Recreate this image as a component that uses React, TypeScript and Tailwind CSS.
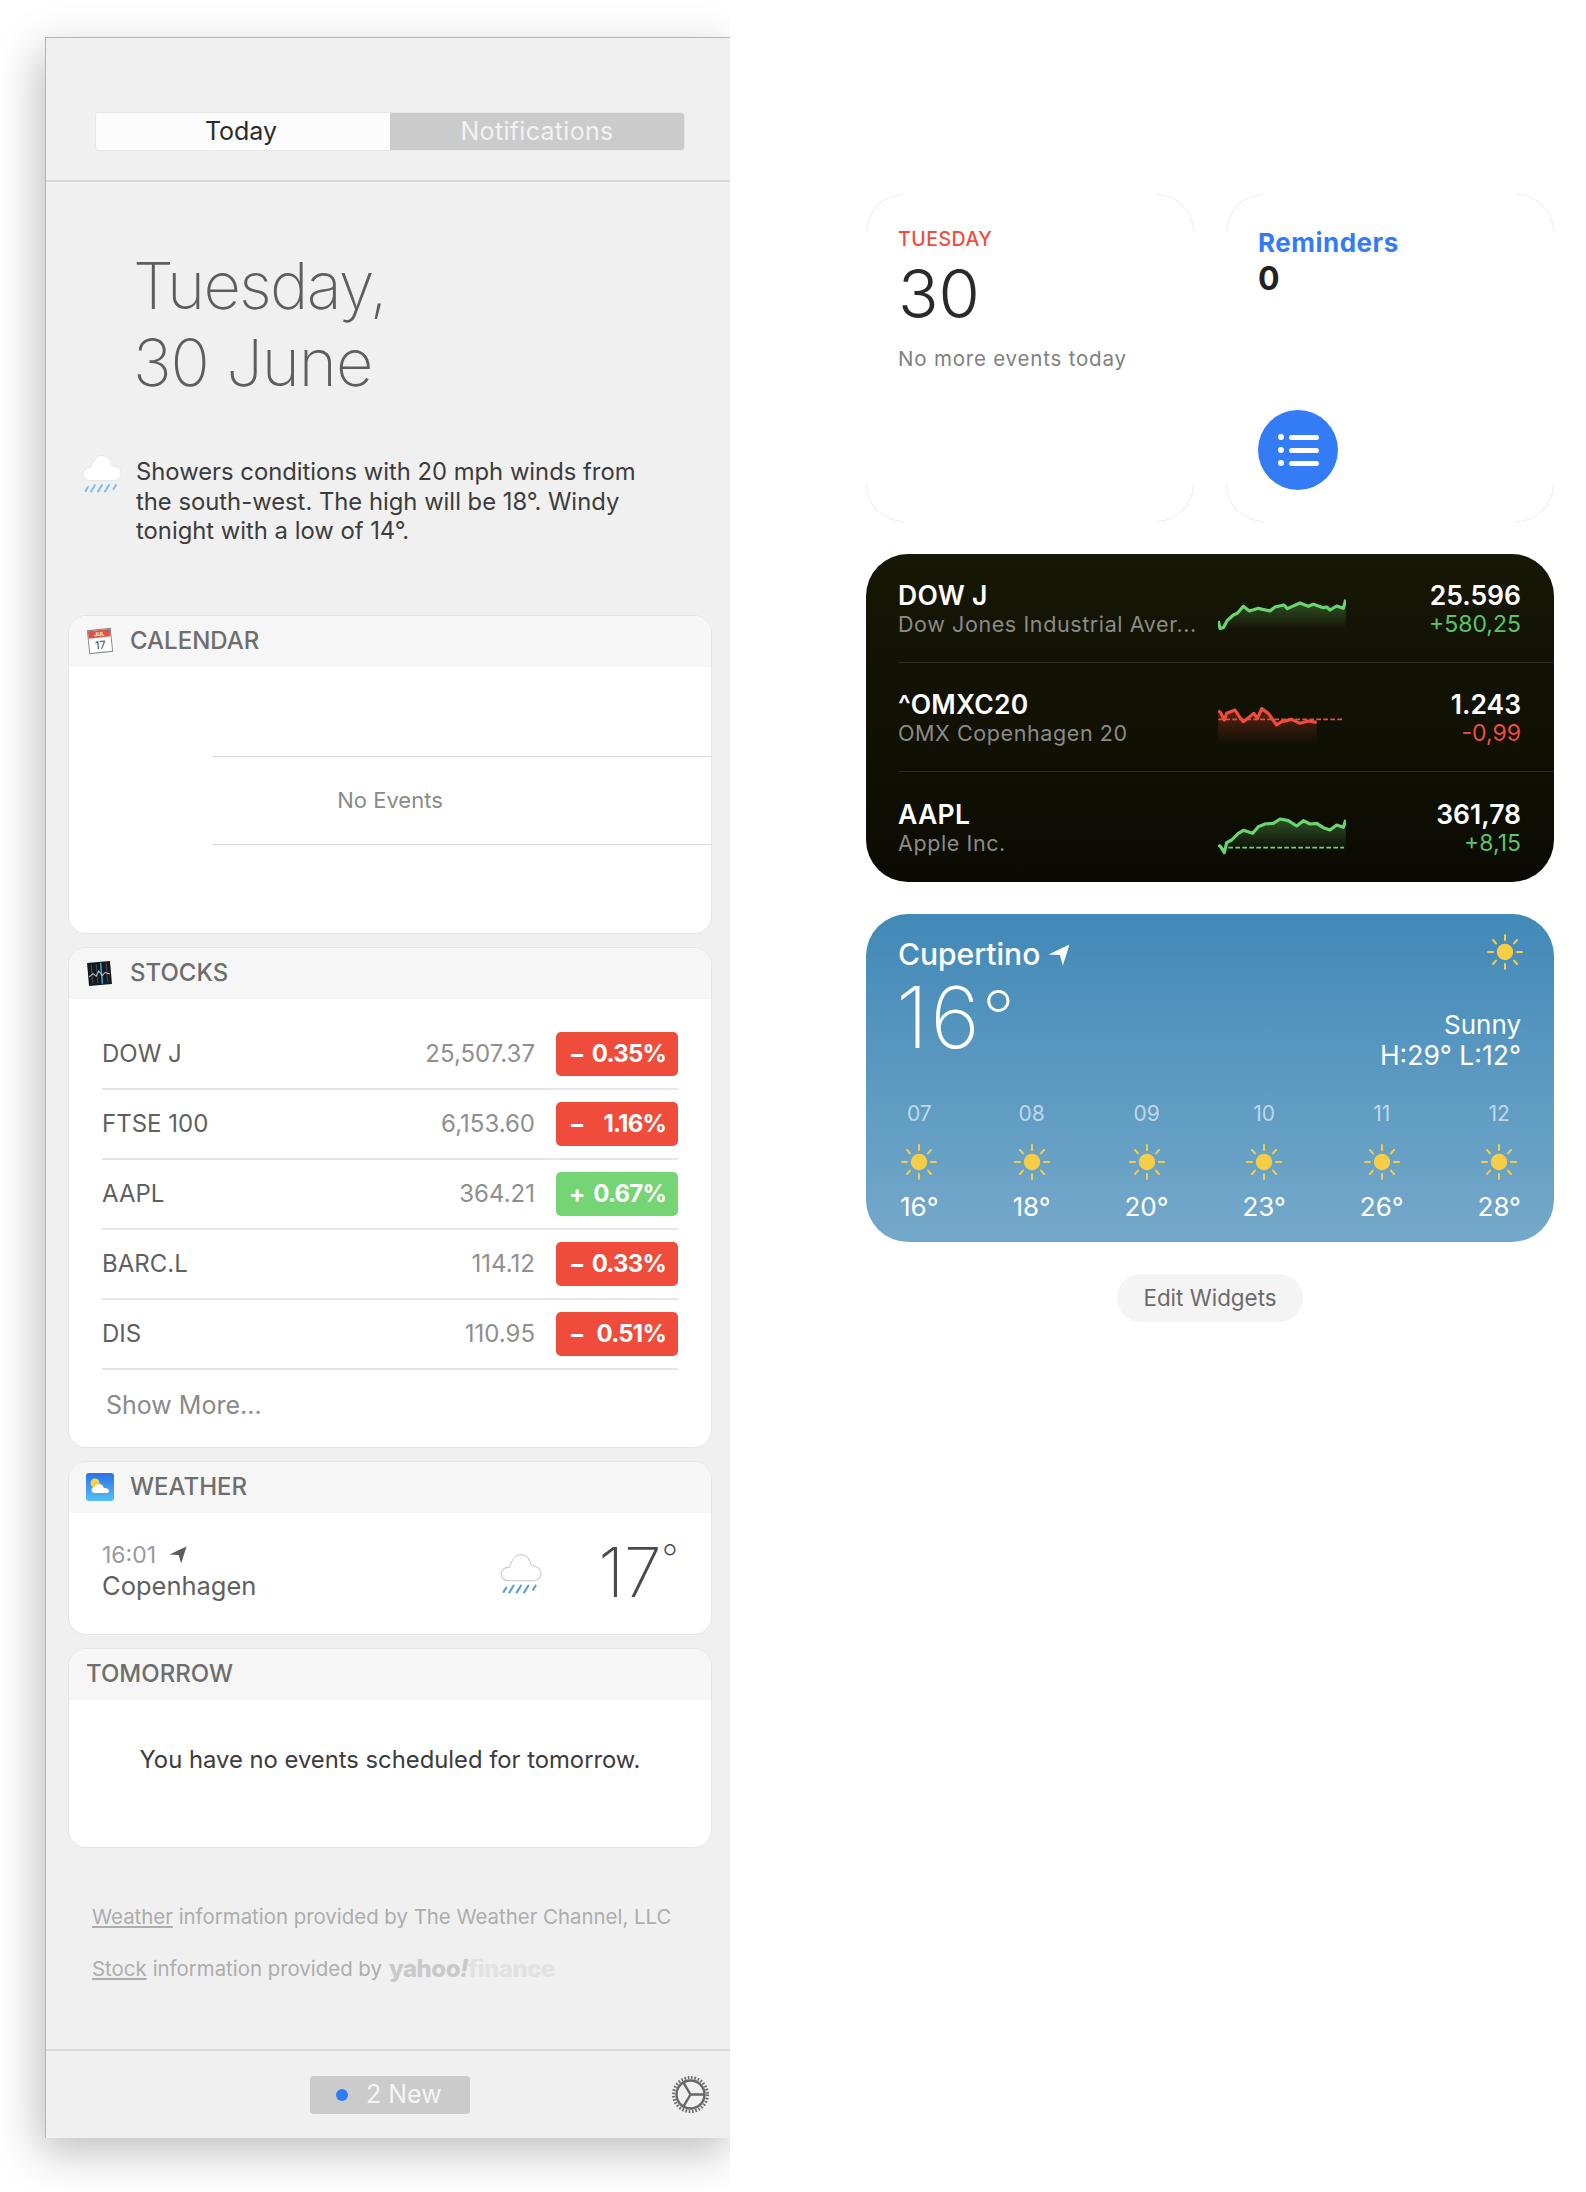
import React from 'react';

const stockRows = [
  { name: 'DOW J', price: '25,507.37', change: '0.35%', up: false },
  { name: 'FTSE 100', price: '6,153.60', change: '1.16%', up: false },
  { name: 'AAPL', price: '364.21', change: '0.67%', up: true },
  { name: 'BARC.L', price: '114.12', change: '0.33%', up: false },
  { name: 'DIS', price: '110.95', change: '0.51%', up: false },
];

const hours = [
  { hour: '07', temp: '16°' },
  { hour: '08', temp: '18°' },
  { hour: '09', temp: '20°' },
  { hour: '10', temp: '23°' },
  { hour: '11', temp: '26°' },
  { hour: '12', temp: '28°' },
];

const Sun = () => (
  <svg width="36" height="36" viewBox="0 0 36 36" fill="none">
    <circle cx="18" cy="18" r="8.2" fill="#f8cd46" />
    <g stroke="#f8cd46" strokeWidth="2" strokeLinecap="round">
      <path d="M18 1v5M18 30v5M1 18h5M30 18h5M6 6l3 3.4M27 26.6l3 3.4M30 6l-3 3.4M9 26.6l-3 3.4" />
    </g>
  </svg>
);

const LocationArrow = ({ className, color }: { className: string; color: string }) => (
  <svg className={className} viewBox="0 0 20 20">
    <path d="M19.500 0.500 L0.500 9.500 L10.800 9.900 L13.500 19.500 Z" fill={color} />
  </svg>
);

const RainCloud = ({ className, rain, outline }: { className: string; rain: string; outline: string }) => (
  <svg className={className} viewBox="0 0 40 40" fill="none">
    <path
      d="M9 26.500C4.500 26.500 1 24 1 20c0-3.600 3-6.300 6.600-6.300 1-.2 1.600-.5 2-1.400C11 7.300 14.500 1.500 20 1.500c5 0 8.500 4 9.300 8.800.2 1 .8 1.400 1.700 1.600 4.400.6 8 3.600 8 7.600 0 4.200-3.500 7-8 7z"
      fill="#fff"
      stroke={outline}
      strokeWidth="1"
    />
    <g stroke={rain} strokeWidth="2" strokeLinecap="round">
      <path d="M6 33l-2.500 4M13 31l-4 6.500M20 31l-4 6.500M27 31l-4 6.500M34 31l-2.500 4" />
    </g>
  </svg>
);

const Gear = () => (
  <svg width="37" height="37" viewBox="0 0 37 37" fill="none" stroke="#666">
    <circle cx="18.500" cy="18.500" r="17" strokeWidth="3" strokeDasharray="1.600 1.740" />
    <circle cx="18.500" cy="18.500" r="14" strokeWidth="2.400" />
    <path d="M18.500 18.500H32M18.500 18.500L11.500 6.700M18.500 18.500L11.500 30.300" strokeWidth="2.400" />
  </svg>
);

const CalendarIcon = () => (
  <svg width="28" height="28" viewBox="0 0 28 28">
    <g transform="rotate(-6 14 14)">
      <rect x="2.500" y="2.500" width="23" height="23" fill="#fff" stroke="#8a8a8a" strokeWidth="1" />
      <rect x="3" y="3" width="22" height="7.500" fill="#d9534a" />
      <text x="14" y="9" fontSize="5.500" fontWeight="700" fill="#fff" textAnchor="middle">JUL</text>
      <text x="14" y="22" fontSize="11" fill="#444" textAnchor="middle">17</text>
    </g>
  </svg>
);

const StocksIcon = () => (
  <svg width="27" height="27" viewBox="0 0 27 27">
    <g transform="rotate(-5 13.500 13.500)">
      <rect x="2" y="2" width="23" height="23" fill="#15181c" />
      <path d="M6 4v19M11 4v19M21 4v19" stroke="#4a4f55" strokeWidth="1" />
      <path d="M15.500 3v21" stroke="#2f9fe0" strokeWidth="1.600" />
      <path d="M3 16l4-3 3 3 3-5 3 5 3-3 5 2" stroke="#c9ccd0" strokeWidth="1" fill="none" />
    </g>
  </svg>
);

const WeatherIcon = () => (
  <svg width="28" height="28" viewBox="0 0 28 28">
    <defs>
      <linearGradient id="wxicon" x1="0" y1="0" x2="0" y2="1">
        <stop offset="0" stopColor="#2a6fe6" />
        <stop offset="1" stopColor="#54c0f5" />
      </linearGradient>
    </defs>
    <rect width="28" height="28" rx="3" fill="url(#wxicon)" />
    <circle cx="9" cy="10" r="4.500" fill="#f8d347" />
    <path d="M9 20c-2 0-3.500-1.300-3.500-3s1.400-3 3.200-3c.8-2 2.500-3 4.300-3 2.600 0 4.500 1.700 4.800 4 .3 0 .6-.1.900-.1 2.500 0 4.300 1.400 4.300 3s-1.500 2.100-3.500 2.100z" fill="#fff" />
  </svg>
);

const Sparkline = ({ points, fillBottom, fillEnd, top, color, dash, id }: {
  points: number[][];
  fillBottom: number;
  fillEnd: number;
  top: number;
  color: string;
  dash?: { y: number; from: number };
  id: string;
}) => {
  const line = points.map((p) => p.join(',')).join(' ');
  const area = `${line} ${fillEnd},${fillBottom} 114,${fillBottom}`;
  return (
    <svg width="128" height="40" viewBox={`114 ${top} 384 120`} fill="none" className="mt-[16px] shrink-0">
      <defs>
        <linearGradient id={id} gradientUnits="userSpaceOnUse" x1="0" y1={top + 10} x2="0" y2={fillBottom}>
          <stop offset="0" stopColor={color} stopOpacity="0.34" />
          <stop offset="1" stopColor={color} stopOpacity="0" />
        </linearGradient>
      </defs>
      <polygon points={area} fill={`url(#${id})`} />
      {dash && (
        <line x1={dash.from} x2="492" y1={dash.y} y2={dash.y} stroke={color} strokeWidth="5" strokeDasharray="14 7" />
      )}
      <polyline points={line} stroke={color} strokeWidth="9.500" strokeLinejoin="round" />
    </svg>
  );
};

const StockWidgetRow = ({ name, sub, value, delta, deltaColor, last, children }: {
  name: string;
  sub: string;
  value: string;
  delta: string;
  deltaColor: string;
  last?: boolean;
  children: React.ReactNode;
}) => (
  <div className={`ml-[32px] h-[109px] pr-[33px] flex items-center ${last ? '' : 'border-b border-[#2c2c1e]'}`}>
    <div className="w-[320px] shrink-0 mt-[3px]">
      <div className="text-[26.500px] leading-[30px] font-semibold tracking-[0.3px] text-white">{name}</div>
      <div className="text-[21.500px] leading-[29px] tracking-[0.6px] text-[#8b8b86] whitespace-nowrap">{sub}</div>
    </div>
    {children}
    <div className="flex-1 text-right mt-[3px]">
      <div className="text-[26.500px] leading-[30px] font-semibold text-white">{value}</div>
      <div className={`text-[23px] leading-[29px] ${deltaColor}`}>{delta}</div>
    </div>
  </div>
);

const Corners = () => (
  <>
    <div className="absolute left-0 top-0 size-[38px] rounded-tl-[38px] border-l border-t border-[#ececec]" />
    <div className="absolute right-0 top-0 size-[38px] rounded-tr-[38px] border-r border-t border-[#ececec]" />
    <div className="absolute left-0 bottom-0 size-[38px] rounded-bl-[38px] border-l border-b border-[#ececec]" />
    <div className="absolute right-0 bottom-0 size-[38px] rounded-br-[38px] border-r border-b border-[#ececec]" />
  </>
);

const Card = ({ icon, title, children }: {
  icon?: React.ReactNode;
  title: string;
  children: React.ReactNode;
}) => (
  <div className="w-[644px] mx-auto rounded-[18px] border border-[#e4e4e4] bg-white overflow-hidden">
    <div className="h-[51px] bg-[#f6f6f6] flex items-center pl-[17px]">
      {icon && <div className="w-[44px] shrink-0 flex">{icon}</div>}
      <span className="text-[24px] font-medium text-[#6e6e6e]">{title}</span>
    </div>
    {children}
  </div>
);

const App = () => {
  return (
    <div className="w-[1586px] h-[2192px] bg-white flex font-[Inter,sans-serif]">
      {/* Notification centre panel, cut off on the right */}
      <div className="w-[730px] h-full shrink-0 overflow-hidden pl-[45px] pt-[37px]">
        <div className="w-[689px] h-[2101px] bg-[#f0f0f0] border-l border-t border-[#b4b4b4] flex flex-col shadow-[-6px_14px_42px_rgba(0,0,0,0.26)]">
          <div className="h-[144px] shrink-0 border-b-2 border-[#dadada] pt-[74px]">
            <div className="w-[590px] h-[39px] mx-auto flex rounded-[4px] overflow-hidden border border-[#e6e6e6] text-[25px]">
              <div className="w-1/2 bg-[#fcfcfc] text-[#2b2b2b] flex items-center justify-center pr-[4px]">Today</div>
              <div className="w-1/2 bg-[#cbcbcb] text-[#f2f2f2] tracking-[0.3px] flex items-center justify-center">Notifications</div>
            </div>
          </div>

          <div className="mt-[65px] pl-[87px] text-[65px] leading-[77px] font-extralight text-[#5e5e5e]">
            <div className="tracking-[-1.800px]">Tuesday,</div>
            <div className="tracking-[-1px]">30 June</div>
          </div>

          <div className="mt-[56px] pl-[36px] flex items-start">
            <RainCloud className="size-[40px] shrink-0 -mt-[3px]" rain="#7dbdf5" outline="#e6e6e6" />
            <p className="ml-[14px] w-[530px] text-[23.800px] leading-[29.500px] text-[#3c3c3c]">
              Showers conditions with 20 mph winds from the south-west. The high will be 18°. Windy tonight with a low of 14°.
            </p>
          </div>

          <div className="mt-[69px] flex flex-col gap-[13px]">
            <Card icon={<CalendarIcon />} title="CALENDAR">
              <div className="h-[266px] pt-[89px] pl-[143px]">
                <div className="h-[89px] border-y border-[#d8d8d8] flex items-center">
                  <span className="w-[356px] text-center text-[22px] text-[#8a8a8a]">No Events</span>
                </div>
              </div>
            </Card>

            <Card icon={<StocksIcon />} title="STOCKS">
              <div className="h-[448px] pt-[21px] px-[33px]">
                {stockRows.map((row) => (
                  <div key={row.name} className="h-[70px] border-b-2 border-[#e6e6e6] flex items-center">
                    <span className="text-[24px] text-[#5f5f5f] flex-1">{row.name}</span>
                    <span className="text-[24px] text-[#8f8f8f]">{row.price}</span>
                    <span className={`ml-[21px] w-[122px] h-[44px] rounded-[5px] pl-[13px] pr-[12px] flex items-center justify-between text-[24px] font-bold tracking-[-0.8px] text-white ${row.up ? 'bg-[#75d574]' : 'bg-[#ef4c3b]'}`}>
                      <span>{row.up ? '+' : '−'}</span>
                      <span>{row.change}</span>
                    </span>
                  </div>
                ))}
                <div className="pl-[4px] pt-[17px] text-[25px] text-[#8a8a8a]">Show More...</div>
              </div>
            </Card>

            <Card icon={<WeatherIcon />} title="WEATHER">
              <div className="h-[121px] px-[33px] flex">
                <div className="pt-[28px]">
                  <div className="flex items-center text-[23px] leading-[28px] text-[#9a9a9a]">
                    16:01
                    <LocationArrow className="size-[18px] ml-[13px]" color="#5c5c5c" />
                  </div>
                  <div className="text-[25.500px] leading-[34px] text-[#5f5f5f]">Copenhagen</div>
                </div>
                <RainCloud className="size-[42px] ml-auto mt-[40px]" rain="#5b9dcc" outline="#c8c8c8" />
                <div className="ml-[56px] pt-[20px] flex items-start font-extralight text-[#4a4a4a]">
                  <span className="text-[68px] leading-[79px]">17</span>
                  <span className="text-[36px] leading-[50px]">°</span>
                </div>
              </div>
            </Card>

            <Card title="TOMORROW">
              <div className="h-[147px] pt-[45px] text-center text-[23.800px] leading-[30px] text-[#3c3c3c]">
                You have no events scheduled for tomorrow.
              </div>
            </Card>
          </div>

          <div className="mt-[43px] pl-[46px] text-[20.400px] leading-[52px] text-[#adadad]">
            <div><span className="underline">Weather</span> information provided by The Weather Channel, LLC</div>
            <div className="flex items-center">
              <span className="underline">Stock</span>
              <span className="ml-[6px]">information provided by</span>
              <span className="ml-[7px] text-[24px] font-extrabold tracking-[-0.5px] text-[#c9c9c9]">yahoo<span className="italic">!</span></span>
              <span className="text-[24px] font-extrabold tracking-[-0.5px] text-[#e2e2e2]">finance</span>
            </div>
          </div>

          <div className="mt-auto h-[89px] border-t-2 border-[#dadada] grid grid-cols-[1fr_160px_1fr] items-center">
            <div />
            <div className="h-[38px] rounded-[4px] bg-[#cbcbcb] flex items-center pl-[26px] text-[25px] text-[#f5f5f5]">
              <span className="size-[12px] rounded-full bg-[#2f7cf6]" />
              <span className="ml-[18px]">2 New</span>
            </div>
            <div className="justify-self-end mr-[25px] flex"><Gear /></div>
          </div>
        </div>
      </div>

      {/* Big Sur widgets */}
      <div className="w-[688px] ml-[136px] pt-[194px] flex flex-col gap-[32px]">
        <div className="grid grid-cols-2 gap-[32px]">
          <div className="relative h-[328px] pl-[32px] pt-[33px]">
            <Corners />
            <div className="text-[19.500px] leading-[24px] font-medium tracking-[0.5px] text-[#f04d3c]">TUESDAY</div>
            <div className="mt-[9px] text-[67px] leading-[67px] font-light text-[#2a2a2a]">30</div>
            <div className="mt-[19px] text-[20.500px] leading-[26px] tracking-[0.8px] text-[#808080]">No more events today</div>
          </div>
          <div className="relative h-[328px] pl-[32px] pt-[34px]">
            <Corners />
            <div className="text-[26px] leading-[30px] font-bold tracking-[0.5px] text-[#347cf6]">Reminders</div>
            <div className="mt-[3px] text-[32px] leading-[36px] font-bold text-[#222]">0</div>
            <div className="mt-[113px] size-[80px] rounded-full bg-[#347cf6] flex flex-col items-center justify-center gap-[7px]">
              {[0, 1, 2].map((i) => (
                <div key={i} className="flex items-center gap-[5px]">
                  <span className="size-[6px] rounded-full bg-white" />
                  <span className="w-[30px] h-[5px] rounded-full bg-white" />
                </div>
              ))}
            </div>
          </div>
        </div>

        <div className="h-[328px] rounded-[42px] overflow-hidden bg-gradient-to-b from-[#171705] to-[#0b0b03]">
          <StockWidgetRow name="DOW J" sub="Dow Jones Industrial Aver..." value="25.596" delta="+580,25" deltaColor="text-[#5cc466]">
            <Sparkline
              id="s1"
              top={85}
              color="#6ad56f"
              fillBottom={185}
              fillEnd={498}
              points={[[115,160],[120,182],[130,180],[142,158],[160,142],[172,137],[190,116],[208,130],[235,122],[270,130],[285,118],[312,112],[322,123],[360,106],[385,116],[400,110],[430,120],[440,118],[450,127],[470,115],[490,122],[497,96]]}
            />
          </StockWidgetRow>
          <StockWidgetRow name="^OMXC20" sub="OMX Copenhagen 20" value="1.243" delta="-0,99" deltaColor="text-[#ef4c3b]">
            <Sparkline
              id="s2"
              top={395}
              color="#ef4c3b"
              fillBottom={512}
              fillEnd={410}
              dash={{ y: 438, from: 115 }}
              points={[[115,412],[122,418],[133,440],[140,420],[165,410],[178,430],[190,445],[222,420],[232,436],[245,406],[265,420],[290,455],[305,445],[335,438],[360,450],[385,443],[410,447]]}
            />
          </StockWidgetRow>
          <StockWidgetRow name="AAPL" sub="Apple Inc." value="361,78" delta="+8,15" deltaColor="text-[#5cc466]" last>
            <Sparkline
              id="s3"
              top={725}
              color="#6ad56f"
              fillBottom={835}
              fillEnd={498}
              dash={{ y: 823, from: 145 }}
              points={[[115,815],[122,820],[133,838],[140,808],[155,800],[175,780],[190,771],[218,780],[235,760],[255,752],[280,750],[300,737],[325,742],[350,758],[370,742],[390,752],[410,750],[430,763],[450,770],[470,755],[490,762],[497,740]]}
            />
          </StockWidgetRow>
        </div>

        <div className="h-[328px] rounded-[42px] overflow-hidden bg-gradient-to-b from-[#4189b7] to-[#75a9cb] pl-[32px] pr-[33px] pt-[23px] text-white">
          <div className="flex items-center justify-between">
            <div className="flex items-center text-[30px] leading-[32px] font-medium">
              Cupertino
              <LocationArrow className="size-[22px] ml-[8px] mt-[2px]" color="#fff" />
            </div>
            <div className="-mr-[2px] -mt-[3px] flex"><Sun /></div>
          </div>
          <div className="flex justify-between items-start mt-[6px]">
            <div className="-ml-[2px] flex items-start font-extralight">
              <span className="text-[85px] leading-[84px] tracking-[2px]">16</span>
              <span className="text-[72px] leading-[79px]">°</span>
            </div>
            <div className="mt-[33px] text-right leading-[31px]">
              <div className="text-[26px]">Sunny</div>
              <div className="text-[26.500px]">H:29° L:12°</div>
            </div>
          </div>
          <div className="mt-[31px] ml-[2px] flex justify-between">
            {hours.map((h) => (
              <div key={h.hour} className="flex flex-col items-center">
                <div className="text-[21px] leading-[24px] text-white/60">{h.hour}</div>
                <div className="mt-[18px] flex"><Sun /></div>
                <div className="mt-[12px] text-[26px] leading-[30px]">{h.temp}</div>
              </div>
            ))}
          </div>
        </div>

        <div className="w-[186px] h-[48px] mx-auto rounded-full bg-[#f5f4f4] flex items-center justify-center text-[22.400px] text-[#6b6b6b]">
          Edit Widgets
        </div>
      </div>
    </div>
  );
};

export default App;
